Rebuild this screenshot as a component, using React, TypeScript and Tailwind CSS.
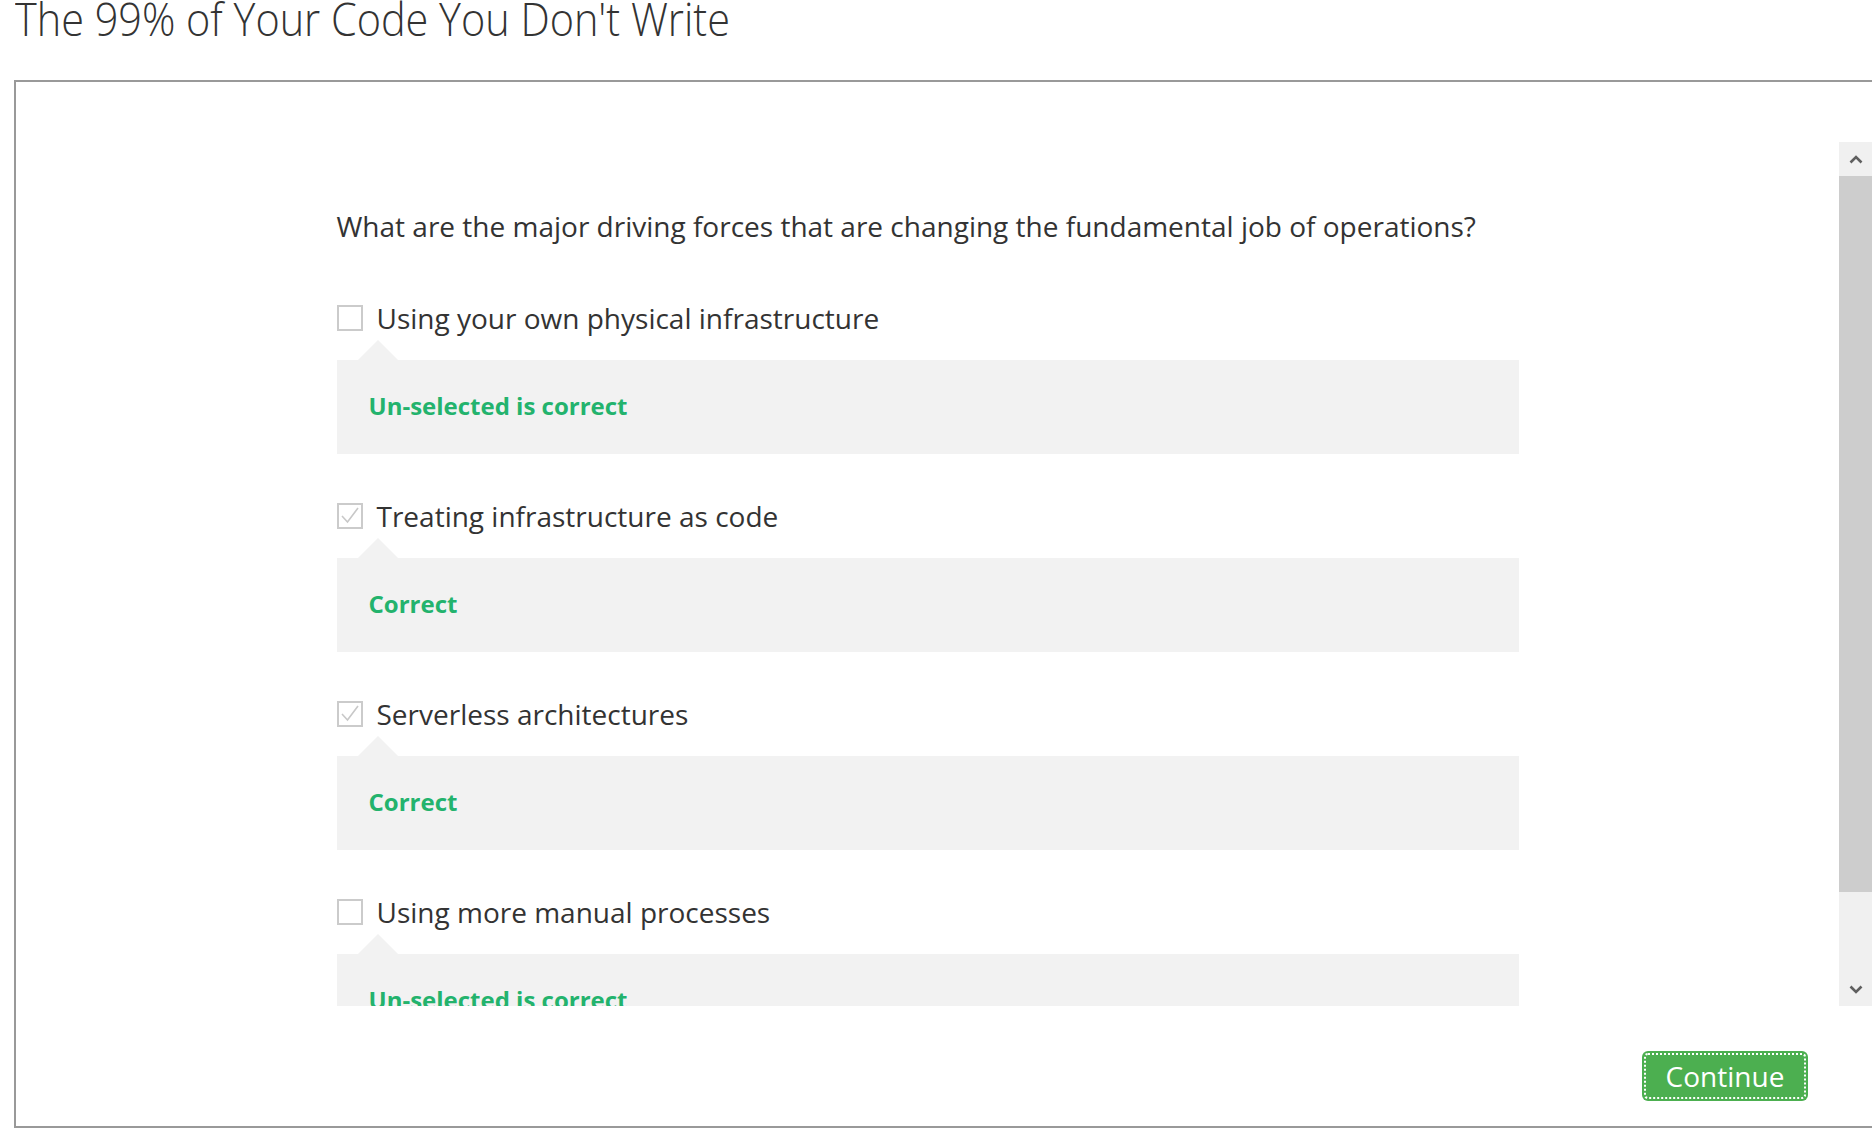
import React from "react";

type Item = { label: string; checked: boolean; feedback: string };

const items: Item[] = [
  { label: "Using your own physical infrastructure", checked: false, feedback: "Un-selected is correct" },
  { label: "Treating infrastructure as code", checked: true, feedback: "Correct" },
  { label: "Serverless architectures", checked: true, feedback: "Correct" },
  { label: "Using more manual processes", checked: false, feedback: "Un-selected is correct" },
];

function CheckBox({ checked }: { checked: boolean }) {
  return (
    <div className="w-[26px] h-[26px] border-2 border-[#cbcbcb] bg-white shrink-0 flex items-center justify-center">
      {checked && (
        <svg width="22" height="22" viewBox="0 0 22 22" fill="none">
          <polyline points="3,11 8.5,17 19,3" stroke="#c8c8c8" strokeWidth="1.6" fill="none" />
        </svg>
      )}
    </div>
  );
}

function Option({ item }: { item: Item }) {
  return (
    <div className="flex flex-col">
      <div className="flex items-center h-[40px] gap-[14px]">
        <CheckBox checked={item.checked} />
        <span className="text-[28px] leading-[40px] text-[#333333]">{item.label}</span>
      </div>
      <div className="h-[22px] pl-[21px] flex items-end">
        <svg width="40" height="20" viewBox="0 0 40 20" className="block">
          <polygon points="0,20 20,0 40,20" fill="#f2f2f2" />
        </svg>
      </div>
      <div className="h-[94px] bg-[#f2f2f2] pl-[32px] flex items-center">
        <span className="text-[24px] leading-[30px] font-bold text-[#23b36d] -mt-[2px]">{item.feedback}</span>
      </div>
    </div>
  );
}

function Chevron({ dir }: { dir: "up" | "down" }) {
  return (
    <svg width="14" height="9" viewBox="0 0 14 9" fill="none">
      {dir === "up" ? (
        <polyline points="1.5,7.5 7,2 12.5,7.5" stroke="#5f5f5f" strokeWidth="2.6" fill="none" />
      ) : (
        <polyline points="1.5,1.5 7,7 12.5,1.5" stroke="#5f5f5f" strokeWidth="2.6" fill="none" />
      )}
    </svg>
  );
}

export default function App() {
  return (
    <div className="w-[1872px] h-[1128px] overflow-hidden bg-white font-['Open_Sans',sans-serif] text-[#333333]">
      <h1 className="pl-[15px] -mt-[5px] h-[46px] text-[46px] leading-[46px] font-light text-[#333333] whitespace-nowrap">
        <span className="inline-block origin-left scale-x-90">The 99% of Your Code You Don't Write</span>
      </h1>
      <div className="ml-[14px] mt-[39px] w-[1858px] h-[1048px] border-l-2 border-t-2 border-b-2 border-[#999999] flex flex-col">
        <div className="mt-[60px] h-[864px] flex">
          <div className="flex-1 overflow-hidden">
            <div className="w-[1182px] mx-auto pt-[64px]">
              <p className="text-[28px] leading-[40px] text-[#333333] whitespace-nowrap">
                What are the major driving forces that are changing the fundamental job of operations?
              </p>
              <div className="mt-[52px] flex flex-col gap-[42px]">
                {items.map((it, i) => (
                  <Option key={i} item={it} />
                ))}
              </div>
            </div>
          </div>
          <div className="w-[33px] bg-[#f0f0f0] flex flex-col">
            <div className="h-[34px] flex items-center justify-center">
              <Chevron dir="up" />
            </div>
            <div className="h-[716px] bg-[#cdcdcd]" />
            <div className="flex-1" />
            <div className="h-[34px] flex items-center justify-center">
              <Chevron dir="down" />
            </div>
          </div>
        </div>
        <div className="mt-[45px] flex justify-end pr-[64px]">
          <button className="w-[166px] h-[50px] rounded-[6px] bg-[#4caf50] text-white text-[28px] leading-[50px] outline-2 outline-dotted outline-white -outline-offset-4">
            Continue
          </button>
        </div>
      </div>
    </div>
  );
}
